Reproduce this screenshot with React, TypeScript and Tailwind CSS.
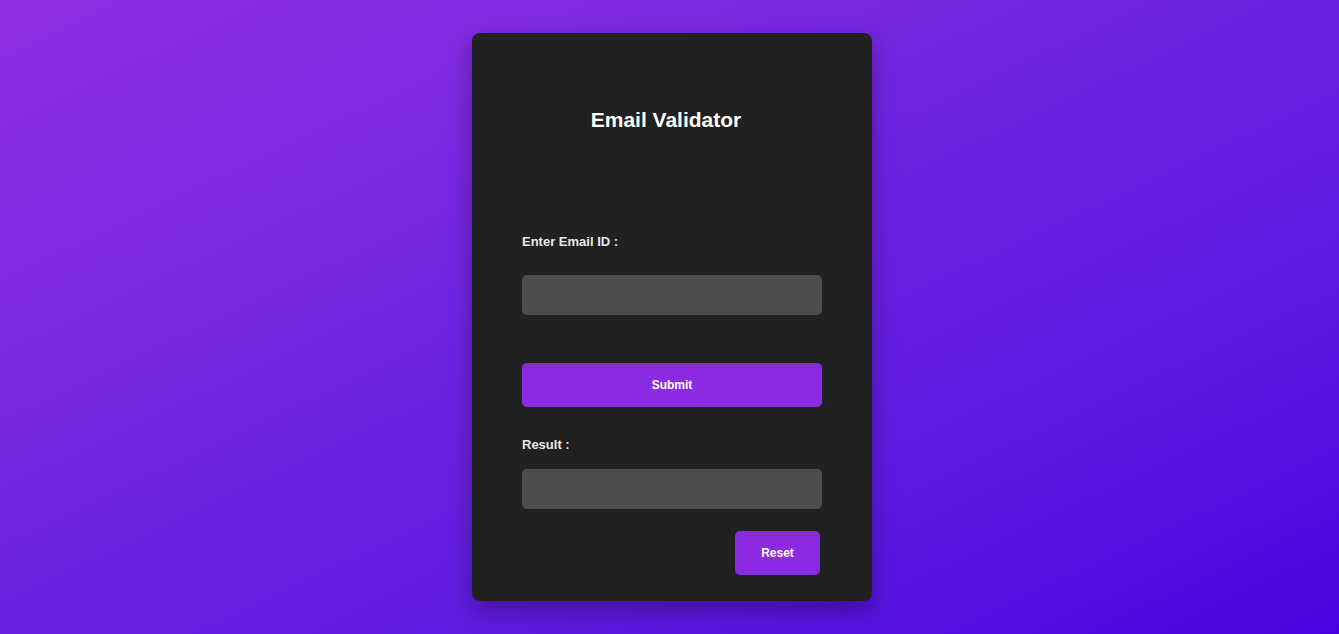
import React, { useState } from "react";

export default function App() {
  const [email, setEmail] = useState("");
  const [result, setResult] = useState("");

  const validate = () => {
    const ok = /^[^\s@]+@[^\s@]+\.[^\s@]+$/.test(email);
    setResult(email ? (ok ? "Valid Email" : "Invalid Email") : "");
  };

  const reset = () => {
    setEmail("");
    setResult("");
  };

  return (
    <div
      className="min-h-screen w-full flex items-center justify-center pl-[5px] bg-gradient-to-br from-[#8e2de2] to-[#4a00e0]"
      style={{ fontFamily: '"Liberation Sans", Arial, sans-serif' }}
    >
      <div className="w-[400px] h-[568px] bg-[#212121] rounded-lg shadow-[0_10px_25px_rgba(0,0,0,0.3)] flex flex-col pt-[75px] px-[50px] pb-[25px]">
        <h2 className="text-center text-[21px] leading-[24px] font-bold text-[#fffdf5] mr-[12px]">
          Email Validator
        </h2>

        <label className="mt-[102px] text-[13px] leading-[15px] font-bold text-[#e8e8e8]">
          Enter Email ID :
        </label>
        <input
          value={email}
          onChange={(e) => setEmail(e.target.value)}
          className="mt-[26px] h-[40px] w-full rounded-[5px] bg-[#4d4d4d] px-3 text-white text-sm outline-none"
        />

        <button
          onClick={validate}
          className="mt-[48px] h-[44px] w-full rounded-[5px] bg-[#8a2be2] text-white text-[12px] font-bold"
        >
          Submit
        </button>

        <label className="mt-[30px] text-[13px] leading-[15px] font-bold text-[#e8e8e8]">
          Result :
        </label>
        <input
          readOnly
          value={result}
          className="mt-[17px] h-[40px] w-full rounded-[5px] bg-[#4d4d4d] px-3 text-white text-sm outline-none"
        />

        <button
          onClick={reset}
          className="mt-[22px] self-end mr-[2px] h-[44px] w-[85px] rounded-[5px] bg-[#8a2be2] text-white text-[12px] font-bold"
        >
          Reset
        </button>
      </div>
    </div>
  );
}
